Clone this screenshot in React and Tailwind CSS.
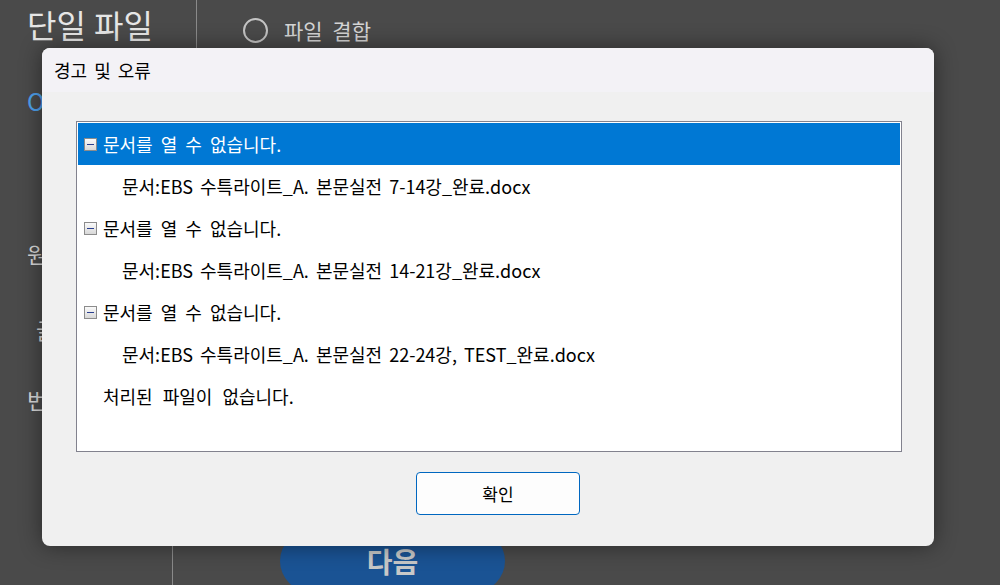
import React from 'react';

const font = { fontFamily: '"Noto Sans CJK KR", "Noto Sans", sans-serif' };

const TreeToggle = () => (
  <span className="inline-flex items-center justify-center w-[13px] h-[13px] border border-[#8c8c8c] bg-gradient-to-b from-[#fafafa] to-[#d8d8d8] shrink-0">
    <span className="block w-[7px] h-[1px] bg-[#2a3f8f]" />
  </span>
);

const ParentRow = ({ selected }) => (
  <div
    className={`h-[42px] flex items-center pl-[6px] gap-[6px] [word-spacing:4px] ${
      selected ? 'bg-[#0078d4] text-white' : 'text-black'
    }`}
  >
    <TreeToggle />
    <span>문서를 열 수 없습니다.</span>
  </div>
);

const ChildRow = ({ name }) => (
  <div className="h-[42px] flex items-center pl-[44px] text-black">문서:{name}</div>
);

const App = () => {
  const files = [
    'EBS 수특라이트_A. 본문실전 7-14강_완료.docx',
    'EBS 수특라이트_A. 본문실전 14-21강_완료.docx',
    'EBS 수특라이트_A. 본문실전 22-24강, TEST_완료.docx',
  ];

  return (
    <div className="relative w-[1000px] h-[585px] overflow-hidden bg-[#4a4a4a] flex flex-col" style={font}>
      <div className="flex flex-1">
        <div className="w-[197px] border-r border-[#8a8a8a] pl-[27px] pt-[4px] text-[#e6e6e6]">
          <div className="text-[32px] leading-[40px] [word-spacing:1px]">단일 파일</div>
          <div className="mt-[42px] text-[24px] leading-[30px] text-[#4ea1ec]">OCR</div>
          <div className="mt-[122px] text-[22px] leading-[30px] text-[#d8d8d8]">원본 폴더</div>
          <div className="mt-[46px] pl-[9px] text-[22px] leading-[30px] text-[#d8d8d8]">글꼴</div>
          <div className="mt-[40px] text-[22px] leading-[30px] text-[#d8d8d8]">번역</div>
        </div>
        <div className="flex-1 pl-[46px] pt-[16px]">
          <div className="flex items-center gap-[16px]">
            <span className="w-[25px] h-[25px] rounded-full border-2 border-[#c4c4c4]" />
            <span className="text-[21px] leading-[28px] text-[#d4d4d4] [word-spacing:5px]">파일 결합</span>
          </div>
        </div>
      </div>
      <div className="h-[55px] flex">
        <div className="w-[173px] border-r border-[#8a8a8a]" />
        <div className="ml-[107px] w-[225px] h-[62px] rounded-full bg-[#1a5394] flex items-center justify-center text-[28px] font-bold text-[#c8c8c8]">
          다음
        </div>
      </div>

      <div className="absolute left-[42px] top-[48px] w-[892px] h-[498px] rounded-[8px] bg-[#f0f0f0] overflow-hidden shadow-[0_0_22px_rgba(0,0,0,0.45)] flex flex-col">
        <div className="h-[44px] bg-[#f3f2f6] flex items-center pl-[12px] text-[18px] text-black [word-spacing:3px]">
          경고 및 오류
        </div>
        <div className="pl-[34px] pt-[29px]">
          <div className="w-[826px] h-[331px] border border-[#82828e] bg-white p-[1px] text-[18px] [word-spacing:3px]">
            <ParentRow selected />
            <ChildRow name={files[0]} />
            <ParentRow />
            <ChildRow name={files[1]} />
            <ParentRow />
            <ChildRow name={files[2]} />
            <div className="h-[42px] flex items-center pl-[25px] text-black [word-spacing:6px]">처리된 파일이 없습니다.</div>
          </div>
        </div>
        <div className="pl-[374px] pt-[20px]">
          <button className="w-[164px] h-[43px] rounded-[4px] border border-[#0067c0] bg-[#fdfdfd] text-[17px] text-black">
            확인
          </button>
        </div>
      </div>
    </div>
  );
};

export default App;
